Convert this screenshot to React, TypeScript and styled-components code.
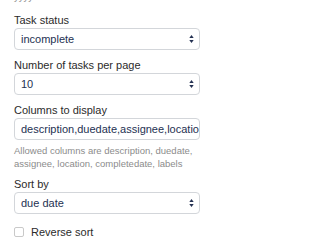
import styled, { createGlobalStyle } from "styled-components";

const GlobalStyle = createGlobalStyle`
  html, body {
    margin: 0;
    padding: 0;
    background: #ffffff;
    overflow: hidden;
  }
  body {
    font-family: "Liberation Sans", Arial, sans-serif;
  }
`;

const Form = styled.div`
  width: 210px;
  box-sizing: border-box;
  padding: 0 10px 0 14px;
  display: flex;
  flex-direction: column;
`;

const FieldGroup = styled.div<{ $gap?: number }>`
  display: flex;
  flex-direction: column;
  margin-bottom: ${({ $gap }) => $gap ?? 7}px;
`;

const Label = styled.label`
  font-size: 11px;
  line-height: 16px;
  color: #2b2b2b;
`;

const HelpText = styled.div<{ $top?: number; $bottom?: number }>`
  font-size: 9.5px;
  line-height: 13px;
  color: #8c8c8c;
  margin-top: ${({ $top }) => $top ?? 4}px;
  margin-bottom: ${({ $bottom }) => $bottom ?? 0}px;
`;

const Box = styled.div`
  position: relative;
  box-sizing: border-box;
  height: 22px;
  border: 1px solid #d3d6da;
  border-radius: 4px;
  background: #fff;
  display: flex;
  align-items: center;
  padding: 0 14px 0 6px;
  overflow: hidden;
`;

const Value = styled.span`
  font-size: 11px;
  color: #243152;
  white-space: nowrap;
`;

const Arrows = styled.svg`
  position: absolute;
  right: 5px;
  top: 50%;
  transform: translateY(-50%);
`;

const CheckRow = styled.div`
  display: flex;
  align-items: center;
  gap: 7px;
  margin-top: 5px;
`;

const CheckBox = styled.span`
  width: 8px;
  height: 8px;
  border: 1px solid #c9c9c9;
  border-radius: 2px;
  background: #fff;
`;

const CheckLabel = styled.span`
  font-size: 11px;
  color: #2b2b2b;
`;

const SelectArrows = () => (
  <Arrows width="5" height="9" viewBox="0 0 5 9">
    <path d="M2.5 0.5 L4.7 3.6 L0.3 3.6 Z" fill="#243152" />
    <path d="M2.5 8.5 L4.7 5.4 L0.3 5.4 Z" fill="#243152" />
  </Arrows>
);

const Select = ({ value }: { value: string }) => (
  <Box>
    <Value>{value}</Value>
    <SelectArrows />
  </Box>
);

const Input = styled(Box)`
  padding-right: 0;
`;

export default function App() {
  return (
    <>
      <GlobalStyle />
      <Form>
        <HelpText $top={-10} $bottom={9}>yyyy.</HelpText>
        <FieldGroup>
          <Label>Task status</Label>
          <Select value="incomplete" />
        </FieldGroup>
        <FieldGroup>
          <Label>Number of tasks per page</Label>
          <Select value="10" />
        </FieldGroup>
        <FieldGroup $gap={6}>
          <Label>Columns to display</Label>
          <Input>
            <Value>description,duedate,assignee,location,completedate</Value>
          </Input>
          <HelpText>
            Allowed columns are description, duedate, assignee, location, completedate, labels
          </HelpText>
        </FieldGroup>
        <FieldGroup>
          <Label>Sort by</Label>
          <Select value="due date" />
        </FieldGroup>
        <CheckRow>
          <CheckBox />
          <CheckLabel>Reverse sort</CheckLabel>
        </CheckRow>
      </Form>
    </>
  );
}
